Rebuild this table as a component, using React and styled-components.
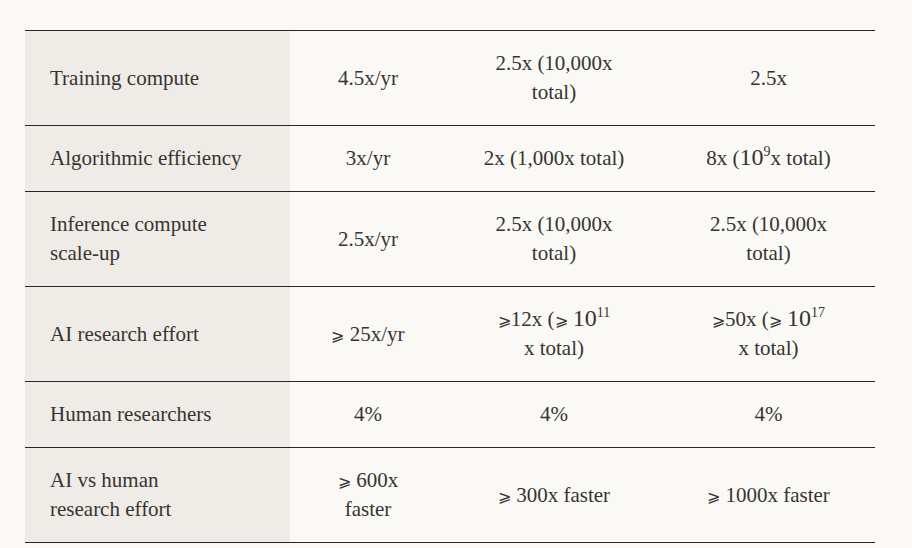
import React from "react";
import styled, { createGlobalStyle } from "styled-components";

const Global = createGlobalStyle`
  html, body { margin: 0; padding: 0; background: #faf9f5; }
  body { font-family: "Liberation Serif", "Times New Roman", serif; color: #363431; }
`;

const Page = styled.div`
  padding: 30px 37px 0 25px;
`;

const Table = styled.table`
  width: 850px;
  border-collapse: collapse;
  table-layout: fixed;
  border-top: 1px solid #2a2826;
  font-family: "Liberation Serif", "Times New Roman", serif;
  color: #363431;
`;

const Row = styled.tr`
  border-bottom: 1px solid #2a2826;
`;

const Label = styled.th`
  width: 215px;
  background: #efece7;
  padding: 18px 25px;
  text-align: left;
  font-family: "Liberation Serif", "Times New Roman", serif;
  font-weight: normal;
  font-size: 21px;
  line-height: 29px;
`;

const Value = styled.td`
  width: ${(p) => p.$w}px;
  padding: 18px 0;
  text-align: center;
  font-family: "Liberation Serif", "Times New Roman", serif;
  font-size: 21px;
  line-height: 29px;
`;

const Big = styled.span`
  font-size: 24px;
  line-height: 0;
`;

const Sup = styled.sup`
  font-size: 14px;
  line-height: 0;
  vertical-align: 9px;
`;

const GE = styled.span`
  font-family: "DejaVu Serif", serif;
  font-size: 16px;
  line-height: 0;
`;

const Pow = ({ e }) => (
  <>
    <Big>10</Big>
    <Sup>{e}</Sup>
  </>
);

const widths = [156, 216, 213];

const rows = [
  {
    label: "Training compute",
    values: ["4.5x/yr", <>2.5x (10,000x<br />total)</>, "2.5x"],
  },
  {
    label: "Algorithmic efficiency",
    values: ["3x/yr", "2x (1,000x total)", <>8x (<Pow e="9" />x total)</>],
  },
  {
    label: <>Inference compute<br />scale-up</>,
    values: ["2.5x/yr", <>2.5x (10,000x<br />total)</>, <>2.5x (10,000x<br />total)</>],
  },
  {
    label: "AI research effort",
    values: [
      <><GE>⩾</GE> 25x/yr</>,
      <><GE>⩾</GE>12x (<GE>⩾</GE> <Pow e="11" /><br />x total)</>,
      <><GE>⩾</GE>50x (<GE>⩾</GE> <Pow e="17" /><br />x total)</>,
    ],
  },
  {
    label: "Human researchers",
    values: ["4%", "4%", "4%"],
  },
  {
    label: <>AI vs human<br />research effort</>,
    values: [
      <><GE>⩾</GE> 600x<br />faster</>,
      <><GE>⩾</GE> 300x faster</>,
      <><GE>⩾</GE> 1000x faster</>,
    ],
  },
];

export default function App() {
  return (
    <>
      <Global />
      <Page>
        <Table>
          <tbody>
            {rows.map((r, i) => (
              <Row key={i}>
                <Label scope="row">{r.label}</Label>
                {r.values.map((v, j) => (
                  <Value key={j} $w={widths[j]}>{v}</Value>
                ))}
              </Row>
            ))}
          </tbody>
        </Table>
      </Page>
    </>
  );
}
